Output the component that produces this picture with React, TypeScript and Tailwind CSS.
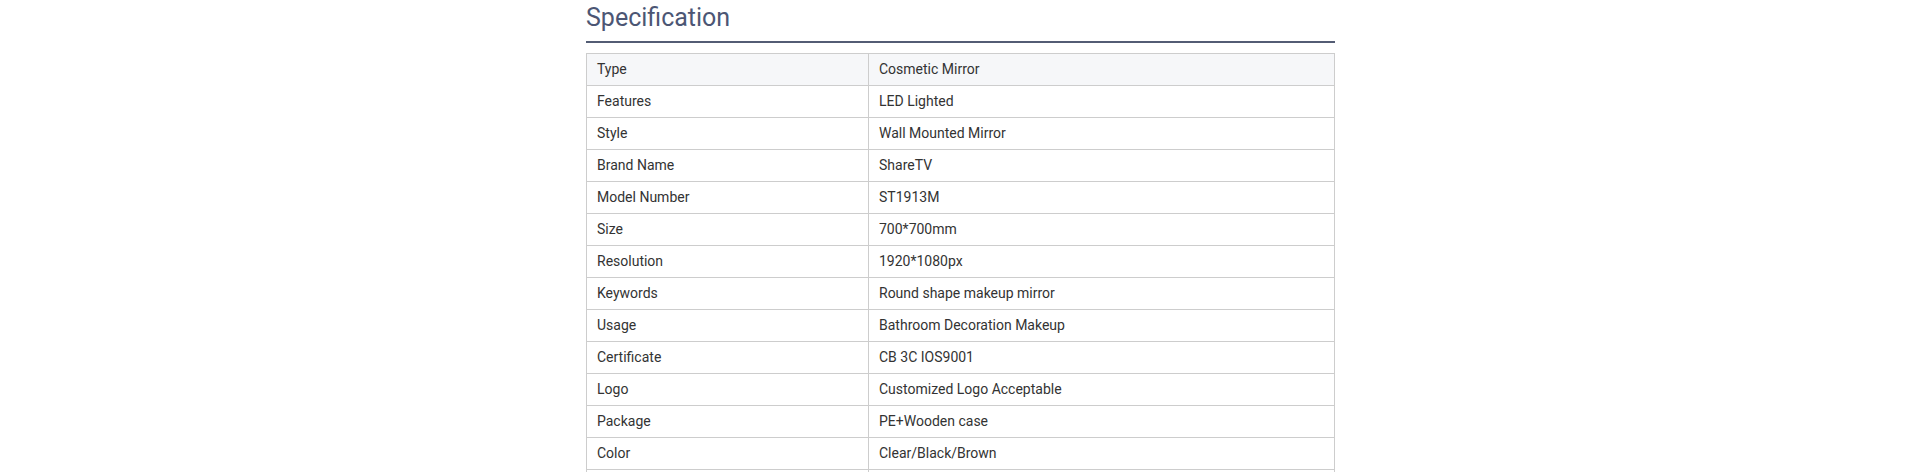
const specs: [string, string][] = [
  ['Type', 'Cosmetic Mirror'],
  ['Features', 'LED Lighted'],
  ['Style', 'Wall Mounted Mirror'],
  ['Brand Name', 'ShareTV'],
  ['Model Number', 'ST1913M'],
  ['Size', '700*700mm'],
  ['Resolution', '1920*1080px'],
  ['Keywords', 'Round shape makeup mirror'],
  ['Usage', 'Bathroom Decoration Makeup'],
  ['Certificate', 'CB 3C IOS9001'],
  ['Logo', 'Customized Logo Acceptable'],
  ['Package', 'PE+Wooden case'],
  ['Color', 'Clear/Black/Brown'],
  ['', ''],
];

export default function App() {
  return (
    <div className="h-[472px] overflow-hidden bg-white" style={{ fontFamily: 'Roboto, "Liberation Sans", sans-serif' }}>
      <section className="mx-auto w-[750px] pl-px">
        {/* Heading */}
        <h2 className="border-b-2 border-[#535c74] pb-[7px] pt-[2px] text-[25px] leading-[32px] text-[#4c5674]">
          Specification
        </h2>

        {/* Spec table */}
        <table className="mt-[10px] w-full border-collapse text-[14px] text-[#333]">
          <tbody>
            {specs.map(([name, value], i) => (
              <tr key={i} className={i === 0 ? 'bg-[#f6f7f9]' : 'bg-white'}>
                <td className="h-[32px] w-[282px] border border-[#cdcdcd] px-[10px] py-0">{name}</td>
                <td className="h-[32px] border border-[#cdcdcd] px-[10px] py-0">{value}</td>
              </tr>
            ))}
          </tbody>
        </table>
      </section>
    </div>
  );
}
